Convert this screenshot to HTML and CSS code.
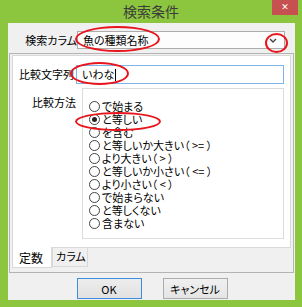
FILE: index.html
```html
<!DOCTYPE html>
<html>
<head>
  <meta charset="utf-8">
  <title>検索条件</title>
  <link rel="stylesheet" href="styles.css">
</head>
<body>
  <div class="window">
    <div class="titlebar">
      <span class="title">検索条件</span>
      <span class="close">&#x2715;</span>
    </div>

    <div class="client">
      <div class="row">
        <label class="lbl lbl-column">検索カラム</label>
        <div class="combo">
          <span class="combo-text">魚の種類名称</span>
          <svg class="combo-arrow" width="8" height="5" viewBox="0 0 8 5">
            <polyline points="1,1 4,4 7,1" fill="none" stroke="#444" stroke-width="1.4"/>
          </svg>
        </div>
      </div>

      <div class="tab-frame">
        <div class="page">
          <div class="row">
            <label class="lbl lbl-text">比較文字列</label>
            <div class="textbox">いわな<span class="caret"></span></div>
          </div>

          <div class="row method-row">
            <label class="lbl lbl-method">比較方法</label>
            <div class="method-box" id="methods"></div>
          </div>
        </div>

        <div class="tabstrip">
          <span class="tab active">定数</span>
          <span class="tab">カラム</span>
        </div>
      </div>

      <div class="buttons">
        <button class="btn default">OK</button>
        <button class="btn">キャンセル</button>
      </div>
    </div>

    <!-- red annotation marks -->
    <span class="mark mark-combo"></span>
    <span class="mark mark-arrow"></span>
    <span class="mark mark-text"></span>
    <span class="mark mark-radio"></span>
  </div>

  <script>
    const methods = [
      'で始まる', 'と等しい', 'を含む', 'と等しいか大きい（ >= ）', 'より大きい（ > ）',
      'と等しいか小さい（ <= ）', 'より小さい（ < ）', 'で始まらない', 'と等しくない', '含まない'
    ];
    const box = document.getElementById('methods');
    methods.forEach((m, i) => {
      const item = document.createElement('div');
      item.className = 'radio-item';
      item.innerHTML = `<span class="radio${i === 1 ? ' checked' : ''}"></span><span>${m.replace(/</g, '&lt;').replace(/>/g, '&gt;')}</span>`;
      box.appendChild(item);
    });
  </script>
</body>
</html>
```

FILE: styles.css
```css
body {
  margin: 0;
  background: #8cc63f;
  font-family: "Noto Sans CJK JP", "Liberation Sans", sans-serif;
  font-size: 11px;
  font-feature-settings: "palt";
  color: #000;
}
.window {
  position: relative;
  width: 302px;
  height: 307px;
}
.titlebar {
  position: relative;
  height: 23px;
  text-align: center;
}
.title {
  font-size: 14px;
  line-height: 22px;
  color: #3c3c3c;
  font-feature-settings: normal;
}
.close {
  position: absolute;
  top: 0;
  right: 4px;
  width: 26px;
  height: 15px;
  background: #c75050;
  color: #fff;
  font-family: "DejaVu Sans", sans-serif;
  font-size: 9px;
  font-weight: bold;
  line-height: 15px;
  text-align: center;
}
.client {
  box-sizing: border-box;
  margin: 0 7px 0 8px;
  height: 277px;
  padding-top: 8px;
  background: #f0f0f0;
}
.row {
  display: flex;
}
.lbl {
  flex: none;
  text-align: right;
  line-height: 18px;
  white-space: nowrap;
}
.lbl-column { width: 69px; }
.combo {
  box-sizing: border-box;
  display: flex;
  align-items: center;
  justify-content: space-between;
  width: 208px;
  height: 18px;
  padding: 0 7px 0 5px;
  border: 1px solid #acacac;
  background: #fdfdfd;
}
.combo-text { line-height: 16px; }

.tab-frame {
  box-sizing: border-box;
  width: 285px;
  height: 220px;
  margin: 4px 0 0 1px;
  padding: 1px 2px 3px;
  border: 1px solid #b4b4b4;
}
.page {
  box-sizing: border-box;
  height: 193px;
  padding-top: 9px;
  border: 1px solid #d9d9d9;
  background: #fff;
}
.lbl-text {
  width: 61px;
  margin-right: 2px;
  line-height: 19px;
}
.textbox {
  box-sizing: border-box;
  display: flex;
  align-items: center;
  width: 208px;
  height: 19px;
  padding-left: 5px;
  border: 1px solid #7eb4ea;
  background: #fff;
  line-height: 17px;
}
.caret {
  display: inline-block;
  width: 1px;
  height: 12px;
  margin-left: 1px;
  background: #000;
}
.method-row { margin-top: 4px; }
.lbl-method {
  width: 63px;
  padding: 8px 2px 0 0;
  line-height: 13px;
}
.method-box {
  box-sizing: border-box;
  width: 202px;
  height: 151px;
  margin-left: 4px;
  padding: 11px 0 0 6px;
  border: 1px solid #dcdcdc;
  background: #fff;
}
.radio-item {
  display: flex;
  align-items: center;
  gap: 2px;
  height: 13px;
  line-height: 13px;
  white-space: nowrap;
}
.radio {
  box-sizing: border-box;
  position: relative;
  flex: none;
  width: 11px;
  height: 11px;
  border: 1px solid #444;
  border-radius: 50%;
  background: #fff;
}
.radio.checked::after {
  content: "";
  position: absolute;
  left: 2px;
  top: 2px;
  width: 5px;
  height: 5px;
  border-radius: 50%;
  background: #222;
}

.tabstrip {
  display: flex;
  align-items: flex-start;
  height: 21px;
}
.tab {
  box-sizing: border-box;
  width: 36px;
  height: 19px;
  padding-left: 3px;
  border: 1px solid #d9d9d9;
  border-top: none;
  background: #f0f0f0;
  line-height: 16px;
  white-space: nowrap;
}
.tab.active {
  width: 40px;
  height: 21px;
  margin-top: -1px;
  padding-left: 6px;
  background: #fff;
  font-size: 12px;
  line-height: 22px;
}

.buttons {
  display: flex;
  justify-content: center;
  gap: 21px;
  margin-top: 5px;
  padding-left: 1px;
}
.btn {
  box-sizing: border-box;
  width: 65px;
  height: 21px;
  padding: 0;
  border: 1px solid #acacac;
  background: linear-gradient(#f0f0f0, #e5e5e5);
  font-family: inherit;
  font-size: 11px;
  font-feature-settings: "palt";
  color: #000;
}
.btn.default {
  border-color: #3c8ce0;
  background: linear-gradient(#ececec, #e2e2e2);
}

.mark {
  position: absolute;
  box-sizing: border-box;
  border: 2px solid #e8141b;
  border-radius: 50%;
}
.mark-combo { left: 75px; top: 26px; width: 85px; height: 26px; }
.mark-arrow { left: 265px; top: 33px; width: 23px; height: 20px; }
.mark-text { left: 70px; top: 62px; width: 59px; height: 23px; }
.mark-radio { left: 75px; top: 112px; width: 86px; height: 19px; }
```
